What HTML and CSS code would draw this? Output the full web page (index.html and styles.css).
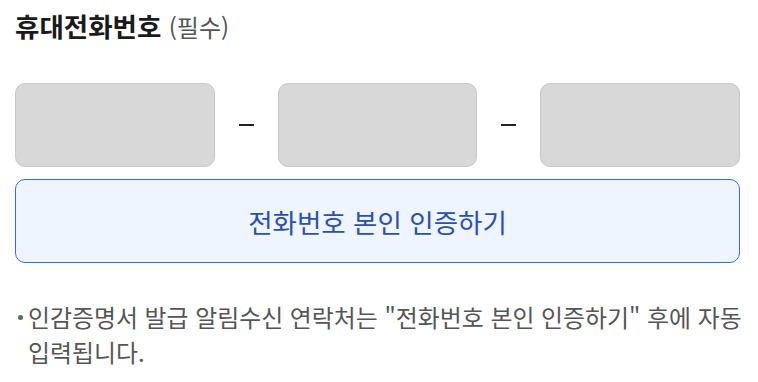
FILE: index.html
```html
<!DOCTYPE html>
<html lang="ko">
<head>
<meta charset="utf-8">
<link rel="stylesheet" href="styles.css">
</head>
<body>
<div class="form">
  <h2 class="label">휴대전화번호 <span class="req">(필수)</span></h2>
  <div class="phone-row">
    <div class="field"></div>
    <div class="sep"><span class="dash"></span></div>
    <div class="field"></div>
    <div class="sep"><span class="dash"></span></div>
    <div class="field"></div>
  </div>
  <button class="verify" type="button">전화번호 본인 인증하기</button>
  <ul class="notes">
    <li>인감증명서 발급 알림수신 연락처는 "전화번호 본인 인증하기" 후에 자동 입력됩니다.</li>
  </ul>
</div>
</body>
</html>
```

FILE: styles.css
```css
html, body {
  margin: 0;
  padding: 0;
  background: #ffffff;
}
body {
  font-family: "Noto Sans CJK KR", "Noto Sans", sans-serif;
  color: #222;
}
.form {
  width: 725px;
  padding: 0 0 0 15px;
}
.label {
  margin: 0;
  padding-top: 8px;
  font-size: 26.5px;
  font-weight: 700;
  line-height: 36px;
  color: #1a1a1a;
}
.req {
  font-size: 24px;
  font-weight: 400;
  color: #555;
}
.phone-row {
  display: flex;
  margin-top: 38px;
  height: 84px;
}
.field {
  flex: 1;
  box-sizing: border-box;
  background: #d8d8d8;
  border: 1px solid #c8c8c8;
  border-radius: 10px;
}
.sep {
  width: 63px;
  display: flex;
  align-items: center;
  justify-content: center;
}
.dash {
  display: block;
  width: 15px;
  height: 2px;
  background: #222;
}
.verify {
  display: block;
  box-sizing: border-box;
  width: 100%;
  height: 84px;
  margin-top: 12px;
  padding: 0;
  background: #eef5ff;
  border: 1px solid #2f6fe6;
  border-radius: 10px;
  font-family: inherit;
  font-size: 26.5px;
  color: #2b4fb3;
  cursor: pointer;
}
.notes {
  list-style: none;
  margin: 36px -15px 0 0;
  padding: 0 0 0 13px;
  font-size: 23.9px;
  line-height: 35px;
  color: #555;
  word-break: keep-all;
}
.notes li {
  position: relative;
}
.notes li::before {
  content: "";
  position: absolute;
  left: -10px;
  top: 16px;
  width: 5px;
  height: 5px;
  border-radius: 50%;
  background: #666;
}
```
